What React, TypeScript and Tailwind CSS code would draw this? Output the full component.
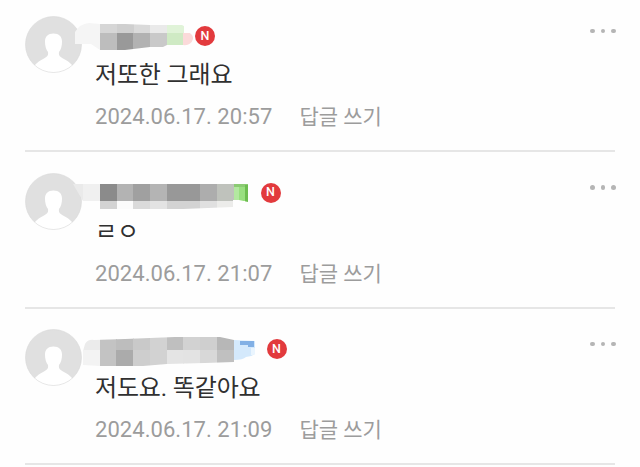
import React from 'react';

type Tile = [x: number, y: number, w: number, h: number, color: string];

interface Comment {
  text: string;
  date: string;
  badge: string;
  outline: string;
  tiles: Tile[];
}

// Tile coordinates start at the top left corner of the comment
const comments: Comment[] = [
  {
    text: '저또한 그래요',
    date: '2024.06.17. 20:57',
    badge: 'left-[170px]',
    outline: 'M50 16 Q54 8 64 7 L75 8 L100 8 L125 9 L157 9 Q161 11 161 14 Q169 19 168 23 Q166 30 158 29 L142 29 L138 31 L125 31 L100 34 L75 34 L66 28 L50 28 Z',
    tiles: [
      [50, 7, 25, 27, '#f5f5f5'],
      [75, 7, 17, 11, '#d6d6d6'],
      [92, 7, 17, 11, '#cfcfcf'],
      [109, 7, 16, 11, '#dadada'],
      [125, 7, 17, 11, '#eaeaea'],
      [142, 7, 17, 11, '#e0f3d8'],
      [75, 17, 17, 18, '#bdbdbd'],
      [92, 17, 16, 18, '#999999'],
      [108, 17, 17, 18, '#b2b2b2'],
      [125, 17, 17, 18, '#c9c9c9'],
      [142, 17, 16, 14, '#cfeac4'],
      [158, 17, 12, 13, '#fbdada'],
    ],
  },
  {
    text: 'ㄹㅇ',
    date: '2024.06.17. 21:07',
    badge: 'left-[235.5px]',
    outline: 'M48 11 L223 11 L223 29 L214 27 L208 27 L208 34 L158 36 L142 36 L75 36 L75 28 L58 28 Z',
    tiles: [
      [48, 11, 10, 17, '#eaeaea'],
      [58, 11, 17, 17, '#f0f0f0'],
      [75, 11, 17, 17, '#8b8b8b'],
      [92, 11, 16, 17, '#b3b3b3'],
      [108, 11, 17, 17, '#a0a0a0'],
      [125, 11, 17, 17, '#b4b4b4'],
      [142, 11, 33, 17, '#989898'],
      [175, 11, 17, 17, '#adadad'],
      [192, 11, 17, 17, '#bfc2bc'],
      [209, 11, 14, 3, '#8bcb73'],
      [209, 14, 5, 14, '#b3e8a0'],
      [214, 14, 6, 14, '#99df80'],
      [220, 12, 3, 17, '#6dbd50'],
      [75, 28, 17, 8, '#d3d3d3'],
      [92, 28, 16, 8, '#fbfbfb'],
      [108, 28, 17, 8, '#dadada'],
      [125, 28, 17, 8, '#e3e3e3'],
      [142, 28, 33, 8, '#d3d3d3'],
      [175, 28, 17, 8, '#e0e0e0'],
      [192, 28, 17, 8, '#ececea'],
    ],
  },
  {
    text: '저도요. 똑같아요',
    date: '2024.06.17. 21:09',
    badge: 'left-[241.5px]',
    outline: 'M60 15 Q63 10 69 11 L100 10 L150 8 L195 8 L209 11 L230 12 L230 25 Q226 28 221 28 Q218 31 209 31 L209 33 L180 34 L142 35 L118 37 L75 37 L58 36 L58 22 Z',
    tiles: [
      [58, 8, 17, 14, '#ebebeb'],
      [58, 21, 17, 17, '#f3f3f3'],
      [75, 8, 17, 30, '#c3c3c3'],
      [91, 8, 18, 14, '#bdbdbd'],
      [91, 21, 18, 17, '#ababab'],
      [108, 8, 17, 14, '#c9c9c9'],
      [108, 21, 17, 17, '#cecece'],
      [125, 8, 17, 30, '#d2d2d2'],
      [142, 8, 17, 14, '#bfbfbf'],
      [142, 21, 17, 17, '#e4e4e4'],
      [158, 8, 17, 14, '#d2d2d2'],
      [158, 21, 17, 17, '#e3e3e3'],
      [175, 8, 17, 14, '#cfcfcf'],
      [175, 21, 17, 17, '#d8d8d8'],
      [192, 8, 17, 14, '#b7b7b7'],
      [192, 21, 17, 17, '#c0c0c0'],
      [209, 10, 22, 22, '#d4e9fc'],
      [215, 12, 14, 4, '#82b0e5'],
      [223, 16, 6, 2, '#82b0e5'],
      [226, 19, 5, 7, '#eaf5fe'],
    ],
  },
];

const Avatar: React.FC = () => (
  <svg viewBox="0 0 57 57" className="h-[57px] w-[57px] shrink-0">
    <clipPath id="avatar">
      <circle cx="28.5" cy="28.5" r="28.2" />
    </clipPath>
    <circle cx="28.5" cy="28.5" r="28" fill="#e0e0e0" />
    <path
      d="M28.5 17.5 C34 17.5 37 20.5 37 25.5 C37 30 36 33.5 34 36 C33.5 39.5 34.5 40.5 38 42.5 C42 44.5 44.5 46 48 50 L44 58 L13 58 L9 50 C12.5 46 15 44.5 19 42.5 C22.5 40.5 23.5 39.5 23 36 C21 33.5 20 30 20 25.5 C20 20.5 23 17.5 28.5 17.5 Z"
      fill="#ffffff"
      clipPath="url(#avatar)"
    />
    <circle cx="28.5" cy="28.5" r="28" fill="none" stroke="#d9d9d9" strokeWidth="0.6" />
  </svg>
);

const Mosaic: React.FC<{ id: string; outline: string; tiles: Tile[] }> = ({ id, outline, tiles }) => (
  <svg viewBox="0 0 240 40" className="absolute top-0 left-0 h-10 w-60">
    <clipPath id={id}>
      <path d={outline} />
    </clipPath>
    <g clipPath={`url(#${id})`}>
      {tiles.map(([x, y, w, h, color], i) => (
        <rect key={i} x={x} y={y} width={w} height={h} fill={color} />
      ))}
    </g>
  </svg>
);

const App: React.FC = () => {
  return (
    <main className="h-[467px] overflow-hidden bg-[#fefefe] px-[25px] pt-4 font-['Roboto','Noto_Sans_CJK_KR',sans-serif]">
      <div className="flex flex-col gap-[20.5px]">
        {comments.map((comment, i) => (
          <article key={comment.date} className="relative flex h-[136px] shrink-0 border-b-2 border-[#e6e6e6]">
            <Avatar />
            <div className="ml-[13px] flex flex-1 flex-col pt-[41px]">
              <p className="h-9 text-[24px] leading-9 tracking-[-0.15px] whitespace-nowrap text-[#303030]">{comment.text}</p>
              <div className="mt-[10px] flex h-7 items-center gap-[27px] text-[#9c9c9c]">
                <time className="text-[22px] leading-7 tracking-[0.05px]">{comment.date}</time>
                <button className="text-[21px] leading-7 whitespace-nowrap">답글 쓰기</button>
              </div>
            </div>
            <button className="mr-[-0.5px] flex h-[30px] w-[25.5px] items-center justify-between self-start" aria-label="더보기">
              <span className="h-[4.5px] w-[4.5px] rounded-full bg-[#b5b5b5]" />
              <span className="h-[4.5px] w-[4.5px] rounded-full bg-[#b5b5b5]" />
              <span className="h-[4.5px] w-[4.5px] rounded-full bg-[#b5b5b5]" />
            </button>
            <Mosaic id={`mosaic-${i}`} outline={comment.outline} tiles={comment.tiles} />
            <span
              className={`absolute top-[10px] flex h-5 w-5 items-center justify-center rounded-full bg-[#e23a3d] text-[12.5px] font-medium text-white ${comment.badge}`}
            >
              N
            </span>
          </article>
        ))}
      </div>
    </main>
  );
};

export default App;
